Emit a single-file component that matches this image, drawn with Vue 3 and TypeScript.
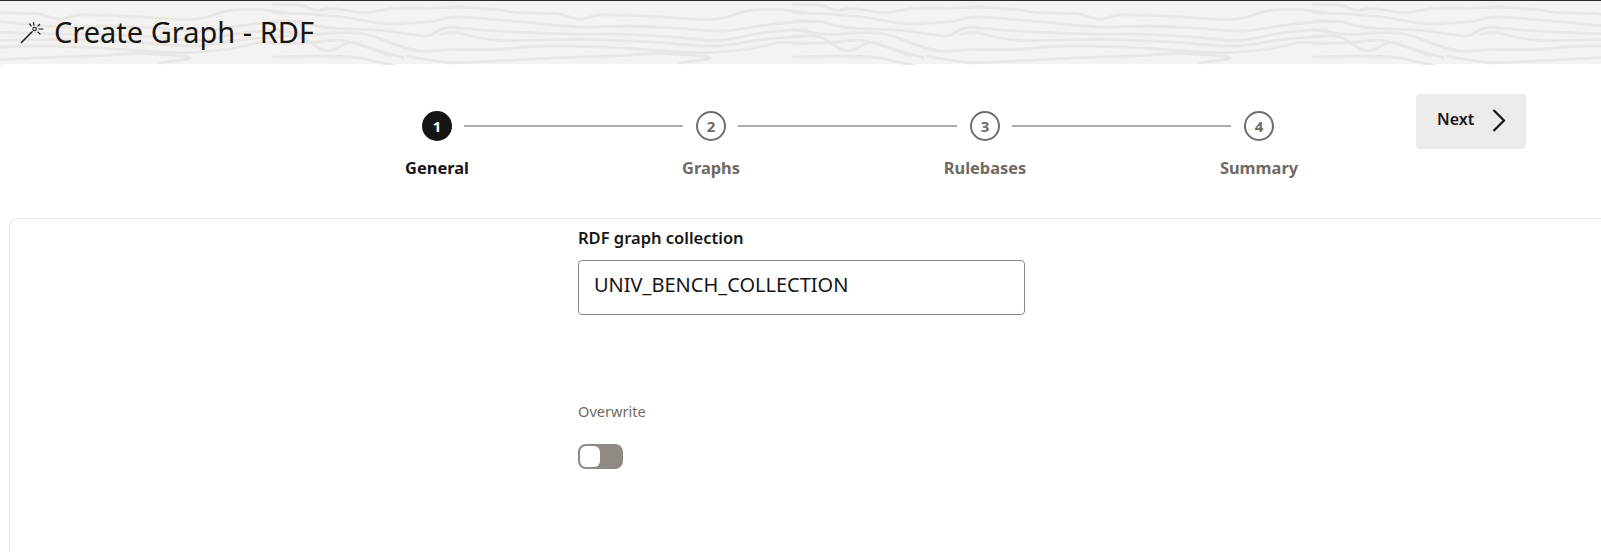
<script setup lang="ts">
type Pt = [number, number];

const grain: Pt[][] = [
  [[-20,10],[60,12],[110,28],[160,22],[250,35],[340,22],[450,22],[540,18],[640,25],[720,35],[830,38],[900,55],[960,42],[1100,45],[1300,55],[1400,30],[1500,26],[1580,35]],
  [[-20,35],[100,40],[200,50],[320,68],[450,62],[520,48],[640,55],[780,68],[900,78],[1050,75],[1200,82],[1330,90],[1470,70],[1580,60]],
  [[-20,60],[60,62],[140,80],[260,85],[340,92],[440,105],[500,80],[620,88],[760,95],[900,100],[1040,100],[1180,108],[1320,118],[1450,95],[1580,85]],
  [[-20,85],[80,100],[180,95],[260,100],[340,128],[420,150],[520,146],[650,145],[800,135],[1000,140],[1250,155],[1400,145],[1500,125],[1580,128]],
  [[480,100],[530,95],[650,118],[900,115],[1100,122],[1300,135],[1450,115],[1580,105]],
  [[-20,105],[60,108],[140,150],[210,125],[280,145],[370,170]],
  [[-20,128],[80,125],[180,118],[250,135],[330,165]],
  [[-20,168],[120,165],[230,170],[300,185],[340,192]],
  [[380,165],[470,180],[540,185],[800,172],[1000,165],[1150,158],[1290,170],[1200,186]],
];

function smooth(points: Pt[]): string {
  const p = points.map(([x, y]): Pt => [x / 3, y / 3]);
  let d = `M${p[0][0].toFixed(1)} ${p[0][1].toFixed(1)}`;
  for (let i = 0; i < p.length - 1; i++) {
    const a = p[Math.max(i - 1, 0)];
    const b = p[i];
    const c = p[i + 1];
    const e = p[Math.min(i + 2, p.length - 1)];
    const c1x = b[0] + (c[0] - a[0]) / 6;
    const c1y = b[1] + (c[1] - a[1]) / 6;
    const c2x = c[0] - (e[0] - b[0]) / 6;
    const c2y = c[1] - (e[1] - b[1]) / 6;
    d += `C${c1x.toFixed(1)} ${c1y.toFixed(1)} ${c2x.toFixed(1)} ${c2y.toFixed(1)} ${c[0].toFixed(1)} ${c[1].toFixed(1)}`;
  }
  return d;
}

const grainPaths = grain.map(smooth);
const tileOffsets = [-520, 0, 520];
const steps = ["General", "Graphs", "Rulebases", "Summary"];
</script>

<template>
  <div class="page">
    <header class="banner">
      <svg class="grain" width="1601" height="64" aria-hidden="true">
        <defs>
          <filter id="soft" x="-5%" y="-20%" width="110%" height="140%">
            <feGaussianBlur stdDeviation="0.5" />
          </filter>
          <pattern id="wood" x="280" y="0" width="520" height="64" patternUnits="userSpaceOnUse">
            <g filter="url(#soft)">
              <g v-for="dx in tileOffsets" :key="dx" :transform="`translate(${dx} 0)`">
                <path v-for="(d, i) in grainPaths" :key="i" :d="d" class="grain-line" />
              </g>
            </g>
          </pattern>
        </defs>
        <rect width="1601" height="64" fill="url(#wood)" />
      </svg>
      <svg class="wand" width="24" height="24" viewBox="0 0 24 24" aria-hidden="true">
        <path d="M1 22 L12.6 10.2" class="wand-stroke wand-handle" />
        <circle cx="14.6" cy="8" r="1.7" class="wand-stroke" />
        <path d="M13.4 1.2 L14 4.6 M20 3 L17.6 5.4 M18.4 8 L23.4 8 M17.6 10.6 L20.4 13.4 M9.4 2.6 L11.4 5.4" class="wand-stroke" />
      </svg>
      <h1 class="title">Create Graph - RDF</h1>
    </header>

    <main class="panel">
      <div class="train-row">
        <div class="train">
          <div class="rail">
            <template v-for="(step, i) in steps" :key="step">
              <span class="dot" :class="{ current: i === 0 }">{{ i + 1 }}</span>
              <span v-if="i < steps.length - 1" class="line"></span>
            </template>
          </div>
          <div class="labels">
            <span v-for="(step, i) in steps" :key="step" class="label" :class="{ current: i === 0 }">{{ step }}</span>
          </div>
        </div>
        <button class="next" type="button">
          <span class="next-text">Next</span>
          <svg width="14" height="23" viewBox="0 0 14 23" aria-hidden="true">
            <path d="M1.5 1 L12 11.5 L1.5 22" class="chevron" />
          </svg>
        </button>
      </div>

      <section class="card">
        <div class="form">
          <label class="field-label" for="collection">RDF graph collection</label>
          <input id="collection" class="text-input" type="text" value="UNIV_BENCH_COLLECTION" />
          <div class="switch-label">Overwrite</div>
          <div class="switch"><span class="knob"></span></div>
        </div>
      </section>
    </main>
  </div>
</template>

<style scoped>
.page {
  width: 1601px;
  height: 552px;
  overflow: hidden;
  display: flex;
  flex-direction: column;
  background: #f4f3f1;
  font-family: "Noto Sans", "Open Sans", sans-serif;
  color: #161513;
}
.banner {
  position: relative;
  flex: none;
  height: 64px;
  box-sizing: border-box;
  border-top: 1px solid #2b2b2b;
  display: flex;
  align-items: center;
  padding: 0 0 2px 20px;
  gap: 10px;
}
.grain {
  position: absolute;
  left: 0;
  top: 0;
}
.grain-line {
  fill: none;
  stroke: #e9e7e4;
  stroke-width: 2.8;
  stroke-linecap: round;
}
.wand {
  position: relative;
  flex: none;
  margin-top: 2px;
}
.wand-stroke {
  fill: none;
  stroke: #161513;
  stroke-width: 1.1;
}
.wand-handle {
  stroke-width: 1.4;
}
.title {
  position: relative;
  margin: 0;
  font-size: 29px;
  line-height: 36px;
  font-weight: 400;
}
.panel {
  flex: 1;
  min-height: 0;
  display: flex;
  flex-direction: column;
  background: #fff;
  border-top-left-radius: 8px;
}
.train-row {
  flex: none;
  height: 154px;
  display: flex;
  align-items: flex-start;
  padding-top: 30px;
  box-sizing: border-box;
}
.train {
  margin-left: 300px;
  padding-top: 17px;
}
.rail {
  display: flex;
  align-items: center;
  margin-left: 122px;
}
.dot {
  flex: none;
  width: 30px;
  height: 30px;
  box-sizing: border-box;
  border: 2px solid #6f6e6c;
  border-radius: 50%;
  display: flex;
  align-items: center;
  justify-content: center;
  font-size: 15px;
  font-weight: 700;
  line-height: 1;
  color: #6f6a64;
}
.dot.current {
  background: #161513;
  border-color: #161513;
  color: #fff;
}
.line {
  flex: none;
  width: 219px;
  height: 2px;
  margin: 0 13px 0 12px;
  background: #aeadab;
}
.labels {
  display: flex;
  margin-top: 16px;
}
.label {
  flex: none;
  width: 274px;
  text-align: center;
  font-size: 16.4px;
  line-height: 22px;
  font-weight: 700;
  color: #6f6a64;
}
.label.current {
  color: #161513;
}
.next {
  flex: none;
  width: 110px;
  height: 55px;
  margin-left: 20px;
  padding: 0 0 3px 21px;
  border: 0;
  border-radius: 4px;
  background: #ecebe9;
  display: flex;
  align-items: center;
  gap: 18px;
  font: 600 16px/22px "Noto Sans", sans-serif;
  color: #161513;
}
.next-text {
  margin-top: -2px;
}
.chevron {
  fill: none;
  stroke: #161513;
  stroke-width: 2.2;
}
.card {
  flex: 1;
  min-height: 0;
  margin-left: 9px;
  border: 1px solid #e8e6e3;
  border-right: 0;
  border-bottom: 0;
  border-top-left-radius: 8px;
}
.form {
  width: 447px;
  margin-left: 568px;
  padding-top: 8px;
}
.field-label {
  display: block;
  font-size: 16.5px;
  line-height: 22px;
  font-weight: 600;
}
.text-input {
  display: block;
  width: 100%;
  height: 55px;
  box-sizing: border-box;
  margin-top: 11px;
  padding: 0 15px 6px;
  border: 1px solid #8a8886;
  border-radius: 4px;
  background: #fff;
  outline: none;
  font: 400 20px "Noto Sans", sans-serif;
  color: #161513;
}
.switch-label {
  margin-top: 86px;
  font-size: 14.6px;
  line-height: 20px;
  color: #6f6a64;
}
.switch {
  width: 45px;
  height: 25px;
  margin-top: 23px;
  box-sizing: border-box;
  padding: 2px;
  border-radius: 8px;
  background: #8f8a83;
}
.knob {
  display: block;
  width: 20px;
  height: 21px;
  border-radius: 6px;
  background: #fff;
}
</style>
